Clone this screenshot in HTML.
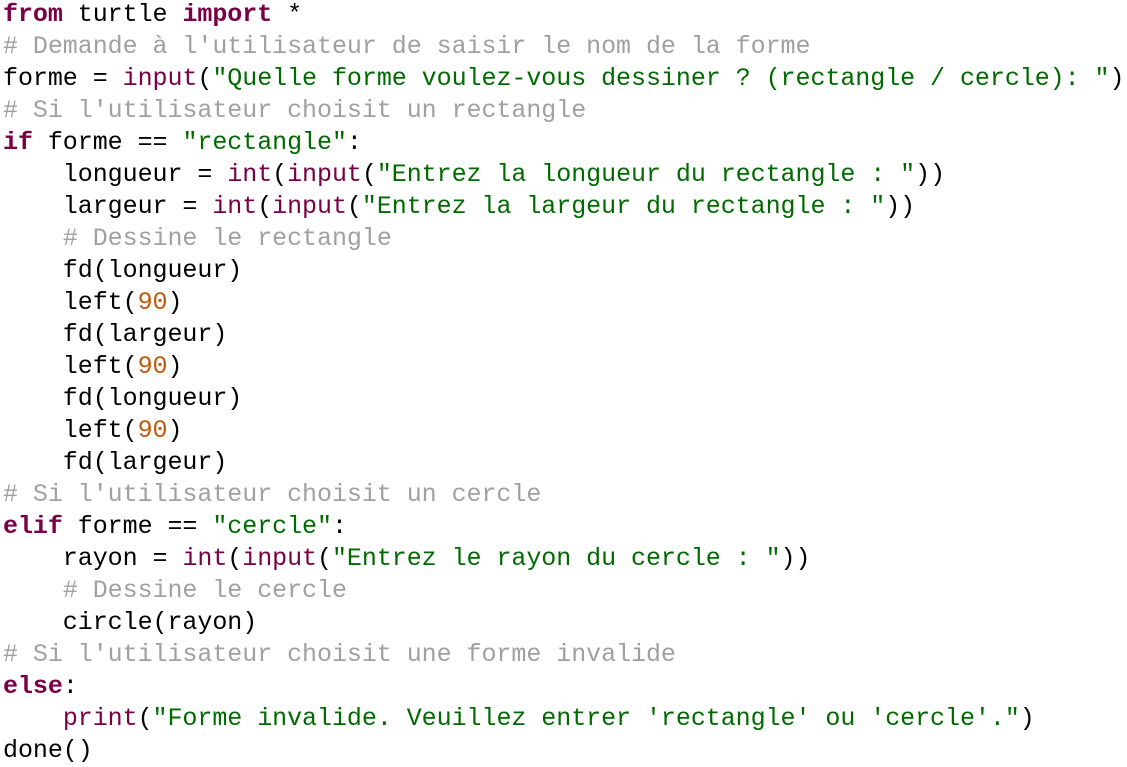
<!DOCTYPE html><html><head><meta charset="utf-8"><style>
body{margin:0;background:#fff;width:1127px;height:766px;overflow:hidden}
pre{position:absolute;left:3px;top:-1px;margin:0;font-family:"Liberation Mono",monospace;font-size:25px;letter-spacing:-0.05px;line-height:32px;color:#000}
.k{color:#7a0046;font-weight:bold}.f{color:#7a0046}.s{color:#006a00}.c{color:#a0a0a0}.n{color:#c0580e}
</style></head><body><pre><span class="k">from</span> turtle <span class="k">import</span> *
<span class="c"># Demande à l'utilisateur de saisir le nom de la forme</span>
forme = <span class="f">input</span>(<span class="s">"Quelle forme voulez-vous dessiner ? (rectangle / cercle): "</span>)
<span class="c"># Si l'utilisateur choisit un rectangle</span>
<span class="k">if</span> forme == <span class="s">"rectangle"</span>:
    longueur = <span class="f">int</span>(<span class="f">input</span>(<span class="s">"Entrez la longueur du rectangle : "</span>))
    largeur = <span class="f">int</span>(<span class="f">input</span>(<span class="s">"Entrez la largeur du rectangle : "</span>))
    <span class="c"># Dessine le rectangle</span>
    fd(longueur)
    left(<span class="n">90</span>)
    fd(largeur)
    left(<span class="n">90</span>)
    fd(longueur)
    left(<span class="n">90</span>)
    fd(largeur)
<span class="c"># Si l'utilisateur choisit un cercle</span>
<span class="k">elif</span> forme == <span class="s">"cercle"</span>:
    rayon = <span class="f">int</span>(<span class="f">input</span>(<span class="s">"Entrez le rayon du cercle : "</span>))
    <span class="c"># Dessine le cercle</span>
    circle(rayon)
<span class="c"># Si l'utilisateur choisit une forme invalide</span>
<span class="k">else</span>:
    <span class="f">print</span>(<span class="s">"Forme invalide. Veuillez entrer 'rectangle' ou 'cercle'."</span>)
done()</pre></body></html>
